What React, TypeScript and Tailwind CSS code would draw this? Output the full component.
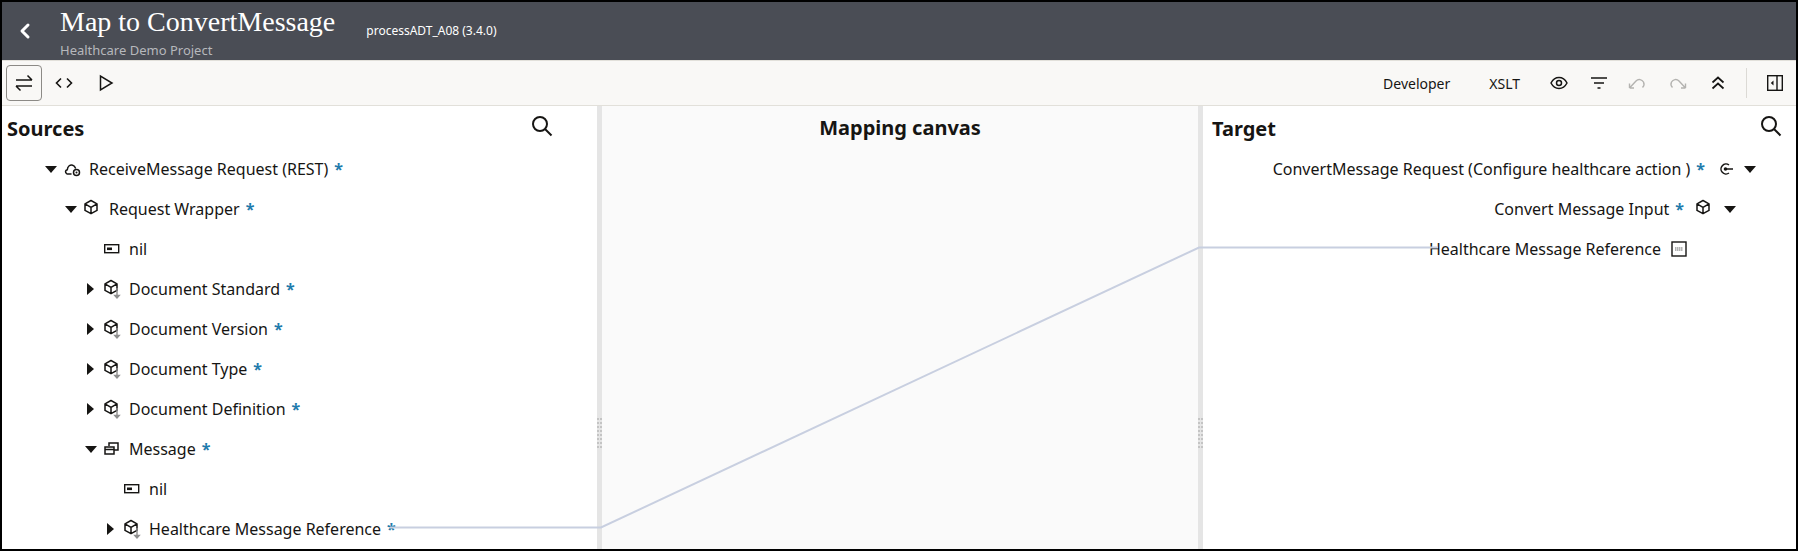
import { ChevronLeft } from "lucide-react"

const sans = "font-['Noto_Sans',sans-serif]"

const CaretDown = () => (
  <svg width="12" height="7" viewBox="0 0 12 7" className="shrink-0">
    <path d="M0 0h12L6 7z" fill="#161513" />
  </svg>
)

const CaretRight = () => (
  <svg width="7" height="12" viewBox="0 0 7 12" className="shrink-0">
    <path d="M0 0v12l7-6z" fill="#161513" />
  </svg>
)

const Cube = ({ arrow }: { arrow?: boolean }) => (
  <svg width="20" height="22" viewBox="0 0 20 22" fill="none" className="shrink-0">
    <path d="M9 2.5l6 3.3v6.6l-6 3.3-6-3.3V5.8z M3 5.8l6 3.5 6-3.5 M9 9.3v6.4" stroke="#161513" strokeWidth="1.5" strokeLinejoin="round" />
    {arrow && <path d="M15 10v9.5 M12.8 17.5l2.2 2.5 2.2-2.5z" stroke="#8f8f8f" strokeWidth="1.4" fill="#8f8f8f" />}
  </svg>
)

const NilIcon = () => (
  <svg width="20" height="12" viewBox="0 0 20 12" fill="none" className="shrink-0">
    <rect x="2.7" y="1.7" width="14" height="8" stroke="#161513" strokeWidth="1.4" />
    <rect x="5" y="4.5" width="5" height="2.6" fill="#161513" />
  </svg>
)

const CloudIcon = () => (
  <svg width="20" height="18" viewBox="0 0 20 18" fill="none" className="shrink-0">
    <path d="M9 14H5.5l-.8-.3c-1.8-1-1.5-3.6.6-4 .2-3.6 3-5.400 5.400-4.500 1.500.5 2.300 1.600 2.700 2.800" stroke="#161513" strokeWidth="1.5" strokeLinecap="round" />
    <circle cx="14.500" cy="12.500" r="3" stroke="#161513" strokeWidth="1.500" />
    <circle cx="14.500" cy="12.500" r="1" fill="#161513" />
  </svg>
)

const ArrayIcon = () => (
  <svg width="20" height="16" viewBox="0 0 20 16" fill="none" className="shrink-0">
    <path d="M7 5V2h9v7h-4" stroke="#161513" strokeWidth="1.500" />
    <path d="M3 6h9v7H3z M3 8.500h9" stroke="#161513" strokeWidth="1.500" />
  </svg>
)

const ActionIcon = () => (
  <svg width="16" height="14" viewBox="0 0 16 14" fill="none" className="shrink-0">
    <path d="M11 3a5 5 0 1 0 0 8" stroke="#161513" strokeWidth="1.500" />
    <circle cx="7.500" cy="7" r="1.800" fill="#161513" />
    <path d="M9 7h6" stroke="#161513" strokeWidth="1.500" />
  </svg>
)

const AbcIcon = () => (
  <svg width="16" height="16" viewBox="0 0 16 16" fill="none" className="shrink-0">
    <rect x="1" y="1" width="14" height="14" stroke="#161513" strokeWidth="1.400" />
    <path d="M4 9h8M4 7h8" stroke="#6b6b6b" strokeWidth="1.200" strokeDasharray="1.500 .5" />
  </svg>
)

const SearchIcon = () => (
  <svg width="22" height="22" viewBox="0 0 22 22" fill="none">
    <circle cx="9" cy="9" r="7" stroke="#161513" strokeWidth="2" />
    <path d="M14 14l6.500 6.500" stroke="#161513" strokeWidth="2" />
  </svg>
)

const Star = () => <span className="text-[#1f7bac] font-bold">*</span>

const ResizeDots = ({ className }: { className: string }) => (
  <div className={`absolute left-0 grid grid-cols-2 gap-x-px gap-y-[2px] w-[5px] ${className}`}>
    {Array.from({ length: 16 }).map((_, i) => (
      <span key={i} className="h-[2px] w-[2px] bg-[#c4c4c4]" />
    ))}
  </div>
)

const sources = [
  { pl: "pl-[40px]", caret: "down", icon: <CloudIcon />, label: "ReceiveMessage Request (REST)", gap: "ml-[7px]", req: true },
  { pl: "pl-[60px]", caret: "down", icon: <Cube />, label: "Request Wrapper", gap: "ml-[7px]", req: true },
  { pl: "pl-[80px]", icon: <NilIcon />, label: "nil", gap: "ml-[7px]" },
  { pl: "pl-[80px]", caret: "right", icon: <Cube arrow />, label: "Document Standard", gap: "ml-[7px]", req: true },
  { pl: "pl-[80px]", caret: "right", icon: <Cube arrow />, label: "Document Version", gap: "ml-[7px]", req: true },
  { pl: "pl-[80px]", caret: "right", icon: <Cube arrow />, label: "Document Type", gap: "ml-[7px]", req: true },
  { pl: "pl-[80px]", caret: "right", icon: <Cube arrow />, label: "Document Definition", gap: "ml-[7px]", req: true },
  { pl: "pl-[80px]", caret: "down", icon: <ArrayIcon />, label: "Message", gap: "ml-[7px]", req: true },
  { pl: "pl-[100px]", icon: <NilIcon />, label: "nil", gap: "ml-[7px]" },
  { pl: "pl-[100px]", caret: "right", icon: <Cube arrow />, label: "Healthcare Message Reference", gap: "ml-[7px]", req: true },
]

const SourceRow = ({ row }: { row: (typeof sources)[number] }) => (
  <div className={`flex h-10 items-center ${row.pl}`}>
    <span className="flex w-5 shrink-0 items-center">
      {row.caret === "down" && <span className="ml-[3px]"><CaretDown /></span>}
      {row.caret === "right" && <span className="ml-[5px]"><CaretRight /></span>}
    </span>
    <span className="flex w-5 shrink-0 items-center justify-center">{row.icon}</span>
    <span className={`${row.gap} whitespace-nowrap`}>{row.label}</span>
    {row.req && <span className="ml-[6px]"><Star /></span>}
  </div>
)

export default function App() {
  return (
    <div className={`relative flex h-[551px] w-[1798px] flex-col overflow-hidden border-2 border-black bg-white text-[16px] text-[#161513] ${sans}`}>
      {/* header */}
      <div className="flex h-[58px] shrink-0 items-center bg-[#4a4d55]">
        <ChevronLeft className="ml-[11px] h-6 w-6 text-white" strokeWidth={3} />
        <div className="ml-[23px] flex flex-col">
          <h1 className="font-['Liberation_Serif',serif] text-[28px] leading-[34px] text-white">Map to ConvertMessage</h1>
          <p className="mt-[3px] text-[13px] leading-[16px] text-[#b6b8bc]">Healthcare Demo Project</p>
        </div>
        <span className="mb-[1px] ml-[31px] text-[12px] text-white">processADT_A08 (3.4.0)</span>
      </div>

      {/* toolbar */}
      <div className="flex h-[46px] shrink-0 items-center border-y border-y-[#e2e0da] bg-[#f9f8f6] pl-1">
        <button className="flex h-9 w-9 items-center justify-center rounded-[4px] border border-[#8c8a86]">
          <svg width="20" height="18" viewBox="0 0 20 18" fill="none" stroke="#161513" strokeWidth="1.500">
            <path d="M2 6h16M13.500 1.500L18 6M2 12h16M6.500 16.500L2 12" />
          </svg>
        </button>
        <svg width="18" height="12" viewBox="0 0 18 12" fill="none" stroke="#161513" strokeWidth="1.600" className="ml-[13px]">
          <path d="M6 1.500L1.500 6 6 10.500M12 1.500L16.500 6 12 10.500" />
        </svg>
        <svg width="16" height="18" viewBox="0 0 16 18" fill="none" stroke="#161513" strokeWidth="1.500" className="ml-[25px]">
          <path d="M2.500 2v14L14 9z" />
        </svg>
        <span className="ml-auto text-[14px]">Developer</span>
        <span className="ml-[39px] text-[14px]">XSLT</span>
        <svg width="18" height="14" viewBox="0 0 18 14" fill="none" stroke="#161513" strokeWidth="1.500" className="ml-[30px]">
          <path d="M1 7c2-3.800 4.800-5.500 8-5.500s6 1.700 8 5.500c-2 3.800-4.800 5.500-8 5.500S3 10.800 1 7z" />
          <circle cx="9" cy="7" r="2.500" />
        </svg>
        <svg width="18" height="14" viewBox="0 0 18 14" fill="none" stroke="#161513" strokeWidth="1.500" className="ml-[22px]">
          <path d="M1 2h16M4 7h10M7.500 12h3" />
        </svg>
        <svg width="18" height="14" viewBox="0 0 18 14" fill="none" stroke="#b4b3b0" strokeWidth="1.400" className="ml-[20px]">
          <path d="M1.500 12V7.500M1.500 12H6M1.500 12l6.500-7c2.500-2.500 6-1.500 7.500 1 1 2 .5 4-1 5.500" />
        </svg>
        <svg width="18" height="14" viewBox="0 0 18 14" fill="none" stroke="#b4b3b0" strokeWidth="1.400" className="ml-[23px]">
          <path d="M16.500 12V7.500M16.500 12H12M16.500 12L10 5C7.500 2.500 4 3.500 2.500 6c-1 2-.5 4 1 5.500" />
        </svg>
        <svg width="14" height="14" viewBox="0 0 14 14" fill="none" stroke="#161513" strokeWidth="1.700" className="ml-[24px]">
          <path d="M1.500 6.500L7 1.500l5.500 5M1.500 12.500L7 7.500l5.500 5" />
        </svg>
        <span className="ml-[21px] h-[30px] w-px bg-[#dcdad5]" />
        <svg width="16" height="16" viewBox="0 0 16 16" fill="none" stroke="#161513" strokeWidth="1.400" className="ml-[20px] mr-[13px]">
          <rect x=".7" y=".7" width="14.600" height="14.600" />
          <path d="M10 .7v14.600" />
          <path d="M6.500 5.500v5L3.800 8z" fill="#161513" strokeWidth="0" />
        </svg>
      </div>

      {/* three panes */}
      <div className="relative flex min-h-0 flex-1">
        <div className="relative w-[595px] shrink-0 overflow-hidden">
          <div className="flex h-[44px] items-center justify-between pl-[5px] pr-[44px]">
            <h2 className="mt-[1px] text-[20px] font-bold">Sources</h2>
            <span className="mb-[5px]"><SearchIcon /></span>
          </div>
          <div className="mt-[-1px]">
            {sources.map((row, i) => <SourceRow key={i} row={row} />)}
          </div>
        </div>

        <div className="relative w-[5px] shrink-0 bg-[#e5e5e5]">
          <ResizeDots className="top-[312px]" />
        </div>

        <div className="flex w-[596px] shrink-0 justify-center bg-[#fafafa] pt-[8px]">
          <h2 className="text-[20px] font-bold leading-[28px]">Mapping canvas</h2>
        </div>

        <div className="relative w-[5px] shrink-0 bg-[#e5e5e5]">
          <ResizeDots className="top-[312px]" />
        </div>

        <div className="min-w-0 flex-1">
          <div className="flex h-[44px] items-center justify-between pl-[9px] pr-[14px]">
            <h2 className="mt-[1px] text-[20px] font-bold">Target</h2>
            <span className="mb-[5px]"><SearchIcon /></span>
          </div>
          <div className="mt-[-1px]">
            <div className="flex h-10 items-center justify-end pr-[40px]">
              <span className="whitespace-nowrap">ConvertMessage Request (Configure healthcare action )</span>
              <span className="ml-[6px]"><Star /></span>
              <span className="ml-[13px]"><ActionIcon /></span>
              <span className="ml-[10px]"><CaretDown /></span>
            </div>
            <div className="flex h-10 items-center justify-end pr-[60px]">
              <span className="whitespace-nowrap">Convert Message Input</span>
              <span className="ml-[6px]"><Star /></span>
              <span className="ml-[10px]"><Cube /></span>
              <span className="ml-[10px]"><CaretDown /></span>
            </div>
            <div className="flex h-10 items-center justify-end pr-[109px]">
              <span className="whitespace-nowrap">Healthcare Message Reference</span>
              <span className="ml-[10px]"><AbcIcon /></span>
            </div>
          </div>
        </div>

        {/* mapping line drawn over the panes */}
        <svg className="pointer-events-none absolute left-0 top-0 h-full w-full" fill="none">
          <path d="M388 421.500H599L1197 141.500H1436" stroke="#c8cfe0" strokeWidth="2" />
        </svg>
      </div>
    </div>
  )
}
